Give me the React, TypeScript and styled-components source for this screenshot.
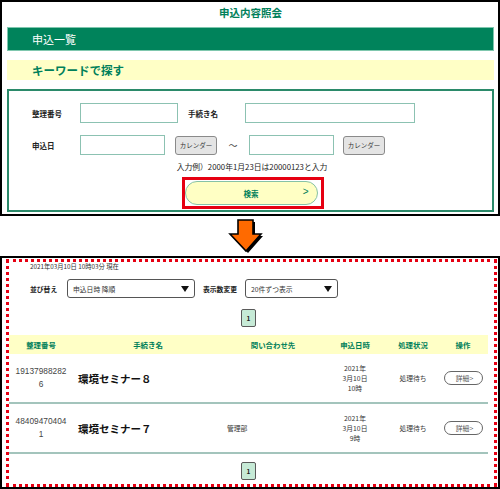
import React from "react";
import styled, { createGlobalStyle } from "styled-components";

const GlobalStyle = createGlobalStyle`
  body {
    margin: 0;
    font-family: "Noto Sans CJK JP", "Noto Sans", sans-serif;
    background: #fff;
  }
`;

type Row = {
  id: string;
  name: string;
  contact: string;
  date: string[];
  status: string;
};

const rows: Row[] = [
  {
    id: "191379882826",
    name: "環境セミナー８",
    contact: "",
    date: ["2021年", "3月10日", "10時"],
    status: "処理待ち",
  },
  {
    id: "484094704041",
    name: "環境セミナー７",
    contact: "管理部",
    date: ["2021年", "3月10日", "9時"],
    status: "処理待ち",
  },
];

export default function App() {
  return (
    <Page>
      <GlobalStyle />
      <TopPanel>
        <Title>申込内容照会</Title>
        <GreenBar>申込一覧</GreenBar>
        <YellowBar>キーワードで探す</YellowBar>
        <FormBox>
          <FormRow>
            <Label width={48}>整理番号</Label>
            <TextInput width={98} />
            <Label width={57} gap={10}>
              手続き名
            </Label>
            <TextInput width={170} />
          </FormRow>
          <FormRow gap={12}>
            <Label width={48}>申込日</Label>
            <TextInput width={85} />
            <CalendarButton>カレンダー</CalendarButton>
            <Tilde>～</Tilde>
            <TextInput width={85} />
            <CalendarButton gap={9}>カレンダー</CalendarButton>
          </FormRow>
          <Hint>入力例）2000年1月23日は20000123と入力</Hint>
          <SearchFrame>
            <SearchButton>
              検索
              <Chevron>&gt;</Chevron>
            </SearchButton>
          </SearchFrame>
        </FormBox>
      </TopPanel>

      <ArrowArea>
        <svg width="40" height="36" viewBox="0 0 40 36">
          <polygon
            points="14,4 29,4 29,18 37,18 22,35 6,18 14,18"
            fill="#000"
          />
          <polygon
            points="12,2 27,2 27,16 35,16 20,33 4,16 12,16"
            fill="#ff6a00"
            stroke="#000"
            strokeWidth="1.6"
            strokeLinejoin="miter"
          />
        </svg>
      </ArrowArea>

      <BottomPanel>
        <DottedBox>
          <Timestamp>2021年03月10日 10時03分 現在</Timestamp>
          <SortRow>
            <SortLabel width={37}>並び替え</SortLabel>
            <Select width={128}>
              申込日時 降順
              <Caret />
            </Select>
            <SortLabel width={42} gap={8}>
              表示数変更
            </SortLabel>
            <Select width={93}>
              20件ずつ表示
              <Caret />
            </Select>
          </SortRow>
          <Pager>
            <PageButton>1</PageButton>
          </Pager>
          <Table>
            <HeadRow>
              <HeadCell>整理番号</HeadCell>
              <HeadCell>手続き名</HeadCell>
              <HeadCell>問い合わせ先</HeadCell>
              <HeadCell>申込日時</HeadCell>
              <HeadCell>処理状況</HeadCell>
              <HeadCell>操作</HeadCell>
            </HeadRow>
            {rows.map((r) => (
              <BodyRow key={r.id}>
                <IdCell>{r.id}</IdCell>
                <NameCell>{r.name}</NameCell>
                <ContactCell>{r.contact}</ContactCell>
                <DateCell>
                  {r.date.map((d) => (
                    <div key={d}>{d}</div>
                  ))}
                </DateCell>
                <StatusCell>{r.status}</StatusCell>
                <ActionCell>
                  <DetailButton>詳細&gt;</DetailButton>
                </ActionCell>
              </BodyRow>
            ))}
          </Table>
          <Pager gap={8}>
            <PageButton>1</PageButton>
          </Pager>
        </DottedBox>
      </BottomPanel>
    </Page>
  );
}

const green = "#00805a";

const Page = styled.div`
  width: 500px;
  height: 489px;
  overflow: hidden;
`;

const TopPanel = styled.div`
  box-sizing: border-box;
  height: 216px;
  border: 2px solid #000;
  padding: 0 4px 0 5px;
`;

const Title = styled.div`
  height: 25px;
  line-height: 22px;
  text-align: center;
  color: ${green};
  font-weight: 700;
  font-size: 10.5px;
`;

const GreenBar = styled.div`
  box-sizing: border-box;
  height: 24px;
  line-height: 22px;
  background: #00835b;
  border: 1px solid #7fc7ae;
  color: #fff;
  font-size: 11px;
  padding-left: 24px;
`;

const YellowBar = styled.div`
  margin-top: 9px;
  height: 20px;
  line-height: 20px;
  background: #ffffc6;
  color: ${green};
  font-weight: 700;
  font-size: 11.5px;
  padding-left: 25px;
`;

const FormBox = styled.div`
  box-sizing: border-box;
  margin-top: 9px;
  height: 123px;
  border: 2px solid #2b8a6a;
  padding-top: 12px;
`;

const FormRow = styled.div<{ gap?: number }>`
  display: flex;
  align-items: center;
  height: 20px;
  padding-left: 23px;
  margin-top: ${({ gap }) => gap ?? 0}px;
`;

const Label = styled.div<{ width: number; gap?: number }>`
  width: ${({ width }) => width}px;
  margin-left: ${({ gap }) => gap ?? 0}px;
  font-size: 7.5px;
  font-weight: 700;
  color: #222;
`;

const TextInput = styled.div<{ width: number }>`
  box-sizing: border-box;
  width: ${({ width }) => width}px;
  height: 20px;
  border: 1.5px solid #8cc2b2;
  background: #fff;
`;

const CalendarButton = styled.div<{ gap?: number }>`
  box-sizing: border-box;
  width: 42px;
  height: 19px;
  margin-left: ${({ gap }) => gap ?? 10}px;
  border: 1px solid #8a8a8a;
  border-radius: 3px;
  background: #e4e4e4;
  font-size: 6.5px;
  color: #333;
  display: flex;
  align-items: center;
  justify-content: center;
`;

const Tilde = styled.div`
  width: 32px;
  text-align: center;
  font-size: 9px;
  color: #444;
`;

const Hint = styled.div`
  margin-top: 7px;
  line-height: 10px;
  text-align: center;
  font-size: 7.8px;
  color: #222;
  padding-left: 3px;
`;

const SearchFrame = styled.div`
  box-sizing: border-box;
  width: 142px;
  height: 32px;
  margin: 5px auto 0;
  position: relative;
  left: 2px;
  border: 3px solid #e60012;
  padding: 1px 3px 1px 0;
`;

const SearchButton = styled.div`
  box-sizing: border-box;
  height: 24px;
  border: 1.5px solid #86c2a6;
  border-radius: 12px;
  background: #ffffc4;
  color: ${green};
  font-size: 7.5px;
  font-weight: 700;
  display: flex;
  align-items: center;
  justify-content: center;
  position: relative;
`;

const Chevron = styled.span`
  position: absolute;
  right: 8px;
  top: 4px;
  font-size: 10px;
  font-weight: 400;
  font-family: "Liberation Sans", sans-serif;
`;

const ArrowArea = styled.div`
  height: 40px;
  display: flex;
  justify-content: center;
  align-items: flex-start;
  padding-right: 8px;
  padding-top: 2px;
  box-sizing: border-box;
`;

const BottomPanel = styled.div`
  box-sizing: border-box;
  height: 233px;
  border: 2px solid #000;
  padding: 1px 1px 0 4px;
`;

const DottedBox = styled.div`
  box-sizing: border-box;
  height: 228px;
  border: 3px dotted #e60012;
  padding-right: 6px;
`;

const Timestamp = styled.div`
  padding-left: 21px;
  margin-top: 1px;
  line-height: 8px;
  font-size: 6.3px;
  color: #333;
`;

const SortRow = styled.div`
  display: flex;
  align-items: center;
  height: 19px;
  margin-top: 8px;
  padding-left: 21px;
`;

const SortLabel = styled.div<{ width: number; gap?: number }>`
  width: ${({ width }) => width}px;
  margin-left: ${({ gap }) => gap ?? 0}px;
  font-size: 6.8px;
  font-weight: 700;
  color: #222;
`;

const Select = styled.div<{ width: number }>`
  box-sizing: border-box;
  width: ${({ width }) => width}px;
  height: 19px;
  border: 1.5px solid #555;
  border-radius: 3px;
  background: #fff;
  font-size: 6.8px;
  color: #333;
  padding-left: 5px;
  display: flex;
  align-items: center;
  justify-content: space-between;
  padding-right: 5px;
`;

const Caret = styled.span`
  width: 0;
  height: 0;
  border-left: 4.5px solid transparent;
  border-right: 4.5px solid transparent;
  border-top: 6px solid #111;
`;

const Pager = styled.div<{ gap?: number }>`
  display: flex;
  justify-content: center;
  margin-top: ${({ gap }) => gap ?? 11}px;
`;

const PageButton = styled.div`
  box-sizing: border-box;
  width: 15px;
  height: 18px;
  border: 1.5px solid #5a5a5a;
  border-radius: 2px;
  background: #c6ead6;
  font-size: 6.5px;
  font-weight: 700;
  color: #222;
  display: flex;
  align-items: center;
  justify-content: center;
`;

const Table = styled.div`
  margin-top: 8px;
`;

const columns = "64px 150px 100px 64px 52px 48px";

const HeadRow = styled.div`
  display: grid;
  grid-template-columns: ${columns};
  height: 19px;
  align-items: center;
  background: #ffffc6;
`;

const HeadCell = styled.div`
  text-align: center;
  font-size: 7.4px;
  font-weight: 700;
  color: ${green};
`;

const BodyRow = styled.div`
  display: grid;
  grid-template-columns: ${columns};
  height: 50px;
  box-sizing: border-box;
  align-items: center;
  border-bottom: 2px solid #a3c4bc;
`;

const IdCell = styled.div`
  padding: 0 5px;
  text-align: center;
  word-break: break-all;
  font-family: "Liberation Sans", sans-serif;
  font-size: 8.3px;
  line-height: 13px;
  color: #444;
`;

const NameCell = styled.div`
  padding-left: 5px;
  font-size: 10.5px;
  font-weight: 700;
  color: #111;
`;

const ContactCell = styled.div`
  padding-left: 4px;
  font-size: 6.8px;
  color: #333;
`;

const DateCell = styled.div`
  text-align: center;
  font-size: 6.8px;
  line-height: 10px;
  color: #333;
`;

const StatusCell = styled.div`
  text-align: center;
  font-size: 6.8px;
  color: #333;
`;

const ActionCell = styled.div`
  display: flex;
  justify-content: center;
`;

const DetailButton = styled.div`
  box-sizing: border-box;
  width: 39px;
  height: 14px;
  border: 1px solid #666;
  border-radius: 7px;
  background: #fff;
  font-size: 6.8px;
  color: #555;
  display: flex;
  align-items: center;
  justify-content: center;
  padding-left: 3px;
`;
